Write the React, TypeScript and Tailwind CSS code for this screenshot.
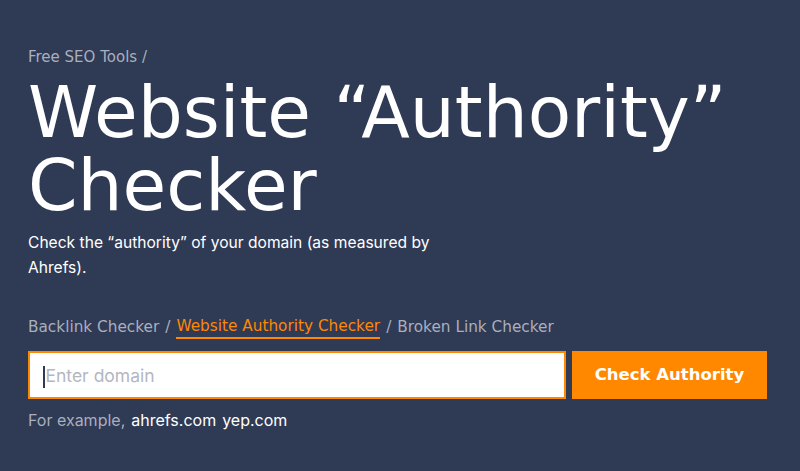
export default function App() {
  return (
    <div className="min-h-[471px] w-full bg-[#2f3a55] px-[28px] pt-[47px] text-white [font-family:Inter,'Liberation_Sans',sans-serif]">
      {/* breadcrumb */}
      <div className="text-[15px] leading-[20px] text-[#a9afbd] [font-family:'DejaVu_Sans',sans-serif]">
        Free SEO Tools /
      </div>

      {/* title */}
      <h1 className="mt-[9px] text-[71px] leading-[73px] font-normal [font-family:'DejaVu_Sans',sans-serif]">
        Website “Authority”
        <br />
        Checker
      </h1>

      <p className="mt-[8px] max-w-[445px] text-[15.6px] leading-[25px] text-white">
        Check the “authority” of your domain (as measured by Ahrefs).
      </p>

      {/* tool nav */}
      <nav className="mt-[35px] flex items-center gap-[6px] text-[15.3px] leading-[22px] text-[#a9afbd] [font-family:'DejaVu_Sans',sans-serif]">
        <span>Backlink Checker</span>
        <span>/</span>
        <span className="border-b-2 border-[#ff8800] text-[#ff8800]">Website Authority Checker</span>
        <span>/</span>
        <span>Broken Link Checker</span>
      </nav>

      {/* form */}
      <div className="mt-[12px] flex gap-[6px]">
        <div className="flex h-[48px] w-[538px] items-center border-2 border-[#ff8800] bg-white pl-[13px] pr-[13px] pt-[3px]">
          <span className="mr-[1px] h-[22px] w-[1.5px] bg-[#2f3a55]" />
          <input
            placeholder="Enter domain"
            className="w-full bg-transparent text-[17.5px] text-[#2f3a55] outline-none placeholder:text-[#b2b7c2]"
          />
        </div>
        <button className="h-[48px] w-[195px] bg-[#ff8800] text-[16.5px] font-bold text-white [font-family:'DejaVu_Sans',sans-serif]">
          Check Authority
        </button>
      </div>

      <div className="mt-[10px] flex items-center gap-[6px] text-[16px] leading-[22px]">
        <span className="text-[#a9afbd]">For example,</span>
        <span>ahrefs.com</span>
        <span>yep.com</span>
      </div>
    </div>
  );
}
